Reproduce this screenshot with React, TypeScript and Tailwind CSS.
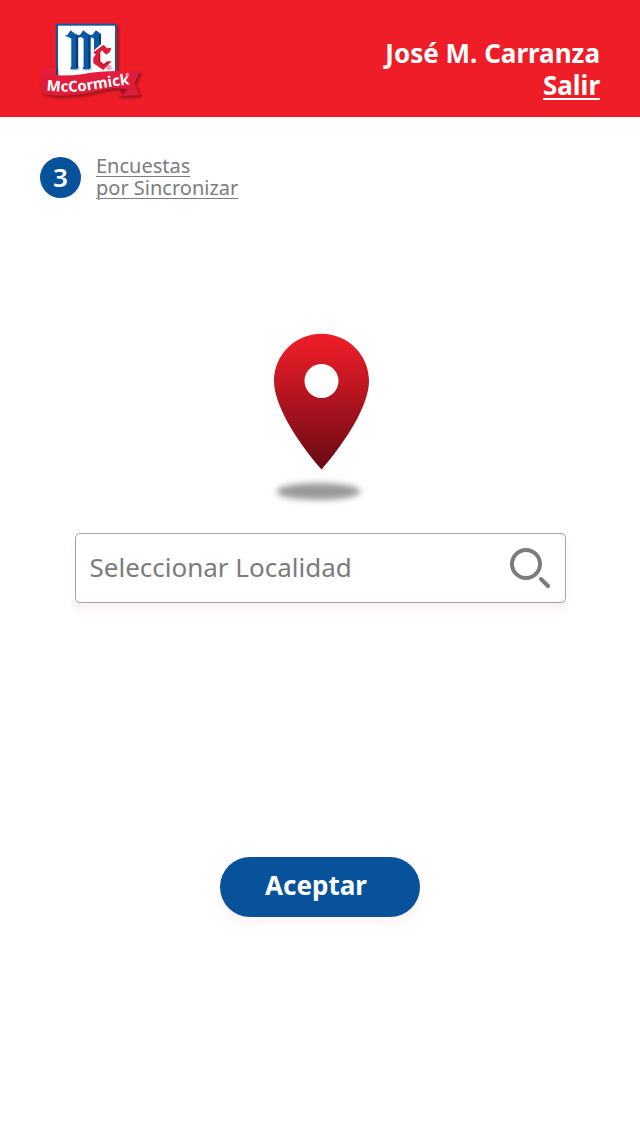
import { useState } from "react";

function Logo() {
  return (
    <svg
      viewBox="30 36 315 243"
      className="block h-[81px] w-[105px] overflow-visible"
      role="img"
      aria-label="McCormick"
    >
      <defs>
        <filter id="logo-shadow" x="-20%" y="-20%" width="140%" height="150%">
          <feDropShadow dx="5" dy="6" stdDeviation="5" floodColor="#6e0a14" floodOpacity="0.75" />
        </filter>
        <linearGradient id="ribbon" x1="0" x2="0" y1="0" y2="1">
          <stop offset="0" stopColor="#e5203c" />
          <stop offset="1" stopColor="#e01c3b" />
        </linearGradient>
        <path id="ribbon-text" d="M49 241 Q120 250 190 239 Q240 230 330 219" />
      </defs>
      <g filter="url(#logo-shadow)">
        <rect x="78" y="41" width="182" height="170" fill="#0b58a2" />
        <rect x="84" y="47" width="171" height="160" fill="#fff" />
      </g>
      <g fill="#c3d3e5">
        <path d="M124 86 H147 V171 L150 178 L141 182 H124 Z" />
        <path d="M161 86 H184 V171 L187 178 L178 182 H161 Z" />
      </g>
      <g fill="#0a59a5">
        <path d="M104 77 L112 75 L122 61 L133 70 L144 75 L150 74 L160 61 L171 70 L181 75 L187 74 L198 61 L213 72 V103 L192 121 V86 L182 81 V88 H163 V86 L152 81 L144 84 V88 H126 V86 L114 81 Z" />
        <path d="M124 80 H144 V167 L146 172 L141 178 H120 L124 169 Z" />
        <path d="M161 80 H181 V167 L183 172 L178 178 H157 L161 169 Z" />
      </g>
      <path d="M141 78 V173 M178 78 V173" stroke="#063c78" strokeWidth="6" fill="none" />
      <path d="M210 74 V103" stroke="#063c78" strokeWidth="6" />
      <path d="M190 127 L221 104 L231 115 L244 113 L240 126 L228 134 L216 121 L211 127 V154 L221 162 L231 154 L245 154 L220 180 L190 160 V143 L197 134 Z" fill="#e11d36" />
      <path d="M208 129 V156 L220 166 L236 157" stroke="#991b38" strokeWidth="3" fill="none" />
      <circle cx="238" cy="173" r="6" fill="none" stroke="#e84b5b" strokeWidth="2" />
      <path d="M236 177 V169 H239 Q241 173 237 173 L241 177" fill="none" stroke="#e84b5b" strokeWidth="1.5" />
      <g filter="url(#logo-shadow)">
        <path d="M266 207 L299 186 L330 184 L313 220 L329 256 L267 257 Z" fill="#dc1b3b" />
        <path d="M34 177 Q38 171 78 170 L78 195 Q110 199 155 193 Q230 180 299 184 L296 236 Q253 230 203 244 Q91 267 37 249 Q29 222 34 177 Z" fill="url(#ribbon)" />
      </g>
      <path d="M266 235 L296 236 L277 256 Z" fill="#a60f2c" />
      <text fill="#fff" fontSize="45" fontWeight="700" fontFamily="'Noto Sans', sans-serif">
        <textPath href="#ribbon-text">McCormick</textPath>
      </text>
      <circle cx="292" cy="194" r="4" fill="none" stroke="#fff" strokeWidth="2" />
      <circle cx="292" cy="194" r="1.5" fill="#fff" />
    </svg>
  );
}

function LocationPin() {
  return (
    <svg viewBox="-2 0 125 195" className="block h-[195px] w-[125px]" aria-hidden="true">
      <defs>
        <linearGradient id="pin" x1="0" x2="0" y1="0" y2="1">
          <stop offset="0" stopColor="#ed1c27" />
          <stop offset="0.1" stopColor="#e61c27" />
          <stop offset="1" stopColor="#680a15" />
        </linearGradient>
        <filter id="pin-shadow" x="-20%" y="-70%" width="140%" height="240%">
          <feGaussianBlur stdDeviation="3" />
        </filter>
      </defs>
      <ellipse cx="58.5" cy="171.5" rx="42" ry="8.5" fill="#999" filter="url(#pin-shadow)" />
      <path
        fill="url(#pin)"
        fillRule="evenodd"
        d="M61.5 13.7 C35 13.7 14 35 14 61 C14 84 35 119 61.5 149.5 C88 119 109 84 109 61 C109 35 88 13.7 61.5 13.7 Z M61.5 44 A17 17 0 1 1 61.5 78 A17 17 0 1 1 61.5 44 Z"
      />
    </svg>
  );
}

export default function App() {
  const [place, setPlace] = useState("");

  return (
    <div className="min-h-screen bg-white font-['Noto_Sans',sans-serif]">
      <header className="flex items-start justify-between bg-[#ee1d27] px-10 pt-[22px] pb-[14px] text-white">
        <Logo />
        <div className="flex flex-col items-end pt-[15px] text-[26px] leading-8 font-bold">
          <span>José M. Carranza</span>
          <a href="#salir" className="underline decoration-2 underline-offset-3">Salir</a>
        </div>
      </header>

      <main className="flex flex-col px-10 pt-[38px]">
        <a href="#encuestas" className="flex items-center gap-[15px] self-start text-[#7c7c7c]">
          <span className="flex size-[41px] items-center justify-center rounded-full bg-[#07529b] text-[26px] leading-8 font-semibold text-white">
            3
          </span>
          <span className="text-xl leading-[22px] underline decoration-1 underline-offset-3">
            Encuestas
            <br />
            por Sincronizar
          </span>
        </a>

        <form className="mt-[121px] flex flex-col items-center" onSubmit={(e) => e.preventDefault()}>
          <LocationPin />
          <div className="mt-[18px] flex h-[70px] w-full max-w-[491px] items-center rounded-[5px] border border-[#a5a5a8] bg-white px-[14px] shadow-[0_7px_10px_#f8f1f2]">
            <input
              type="text"
              aria-label="Seleccionar Localidad"
              placeholder="Seleccionar Localidad"
              value={place}
              onChange={(e) => setPlace(e.target.value)}
              className="min-w-0 flex-1 bg-transparent pb-[2px] text-[26px] leading-9 text-[#7b7b7b] outline-none placeholder:text-[#7b7b7b]"
            />
            <button type="submit" aria-label="Buscar" className="text-[#7b7b7b]">
              <svg viewBox="0 0 41 41" className="block size-[41px]" fill="none" stroke="currentColor">
                <circle cx="16" cy="16" r="14" strokeWidth="4" />
                <path d="M31 31 L38 38" strokeWidth="4" strokeLinecap="round" />
              </svg>
            </button>
          </div>
          <button
            type="button"
            className="mt-[254px] h-[60px] w-[200px] rounded-full bg-[#07529b] pr-2 pb-1 text-[26px] font-bold text-white shadow-[0_7px_10px_#fbf4f5]"
          >
            Aceptar
          </button>
        </form>
      </main>
    </div>
  );
}
